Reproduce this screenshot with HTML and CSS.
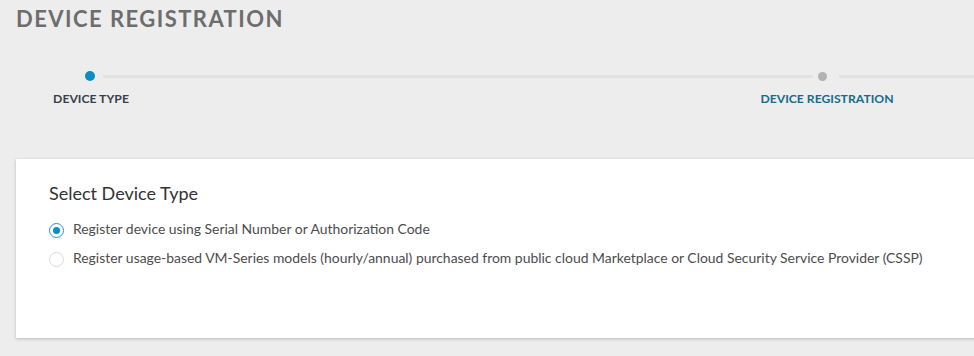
FILE: index.html
```html
<!DOCTYPE html>
<html lang="en">
<head>
<meta charset="utf-8">
<title>Device Registration</title>
<link rel="stylesheet" href="styles.css">
</head>
<body>
<div class="page">
  <h1 class="title">DEVICE REGISTRATION</h1>
  <div class="stepper">
    <div class="track">
      <span class="dot dot-active"></span>
      <span class="line line-first"></span>
      <span class="dot dot-todo"></span>
      <span class="line line-rest"></span>
    </div>
    <div class="labels">
      <span class="label label-done">DEVICE TYPE</span>
      <span class="label label-next">DEVICE REGISTRATION</span>
    </div>
  </div>
  <section class="card">
    <h2 class="card-title">Select Device Type</h2>
    <div class="options">
      <label class="option">
        <span class="radio radio-checked"><span class="radio-dot"></span></span>
        <span class="option-text">Register device using Serial Number or Authorization Code</span>
      </label>
      <label class="option">
        <span class="radio"></span>
        <span class="option-text">Register usage-based VM-Series models (hourly/annual) purchased from public cloud Marketplace or Cloud Security Service Provider (CSSP)</span>
      </label>
    </div>
  </section>
</div>
</body>
</html>
```

FILE: styles.css
```css
html, body {
  margin: 0;
  padding: 0;
  background: #ededed;
  overflow: hidden;
}
body {
  font-family: Lato, "Open Sans", Arial, sans-serif;
  width: 974px;
  height: 356px;
}
.page {
  width: 1120px;
  padding: 5px 0 0 16px;
}
.title {
  margin: 0;
  font-size: 22px;
  line-height: 28px;
  font-weight: 700;
  letter-spacing: 1.45px;
  color: #6d6d6d;
}
.stepper {
  margin-top: 38px;
}
.track {
  display: flex;
  align-items: center;
  height: 10px;
  padding-left: 69px;
}
.dot {
  flex: none;
  border-radius: 50%;
}
.dot-active {
  width: 10px;
  height: 10px;
  background: #0a8ec6;
}
.dot-todo {
  width: 9px;
  height: 9px;
  background: #b3b3b3;
}
.line {
  height: 3px;
  background: #e2e2e2;
}
.line-first {
  width: 710px;
  margin: 0 5px 0 8px;
}
.line-rest {
  flex: 1;
  margin-left: 12px;
}
.labels {
  display: flex;
  margin-top: 11px;
}
.label {
  width: 150px;
  text-align: center;
  font-size: 12.2px;
  line-height: 14px;
  font-weight: 700;
}
.label-done {
  color: #38414a;
}
.label-next {
  margin-left: 586px;
  color: #186b89;
}
.card {
  margin-top: 53px;
  background: #ffffff;
  box-shadow: 0 1px 3px rgba(0, 0, 0, 0.22);
  padding: 23px 33px 0;
  height: 156px;
}
.card-title {
  margin: 0;
  font-size: 18px;
  line-height: 22px;
  font-weight: 400;
  color: #333333;
}
.options {
  display: flex;
  flex-direction: column;
  gap: 9px;
  margin-top: 15px;
}
.option {
  display: flex;
  align-items: center;
  height: 20px;
  gap: 9px;
}
.radio {
  flex: none;
  box-sizing: border-box;
  width: 15px;
  height: 15px;
  border-radius: 50%;
  border: 1px solid #d9d9d9;
  display: flex;
  align-items: center;
  justify-content: center;
  margin-top: 2px;
}
.radio-checked {
  border: 1.5px solid #2a8fe6;
}
.radio-dot {
  width: 7px;
  height: 7px;
  border-radius: 50%;
  background: #0a8ec6;
}
.option-text {
  font-size: 13.93px;
  line-height: 20px;
  color: #4d4d4d;
}
```
